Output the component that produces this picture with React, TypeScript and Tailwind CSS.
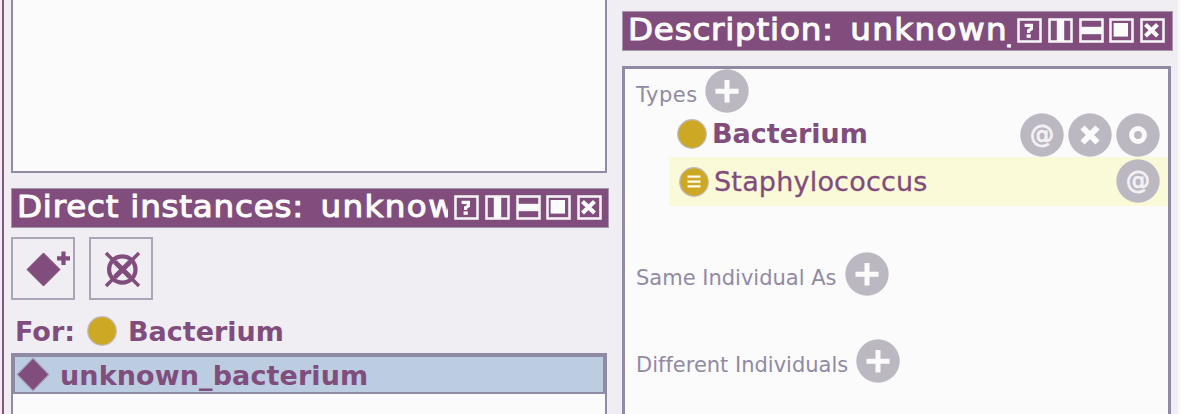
import React from "react";

function Frame({ children }: { children?: React.ReactNode }) {
  return (
    <svg width="25" height="25" viewBox="0 0 25 25" className="shrink-0">
      <rect x="1.5" y="1.5" width="22" height="22" fill="none" stroke="#f4f2f6" strokeWidth="2.6" />
      {children}
    </svg>
  );
}

function WindowButtons() {
  return (
    <div className="flex shrink-0 gap-[5.7px]">
      <Frame>
        <path d="M7.6 7.4H14.4V10.8L11.6 12.6V15" fill="none" stroke="#fbfbfb" strokeWidth="3.2" />
        <path d="M9.6 16.4h4.2v3.4h-4.2z" fill="#fbfbfb" />
      </Frame>
      <Frame>
        <path d="M8.8 2h7.4v21H8.8z" fill="#fbfbfb" />
      </Frame>
      <Frame>
        <path d="M2 8.8h21v7.4H2z" fill="#fbfbfb" />
      </Frame>
      <Frame>
        <path d="M4.6 5h14.4v13.6H4.6z" fill="#fbfbfb" />
      </Frame>
      <Frame>
        <path d="M5.5 6.5L17.5 18M17.5 6.5L5.5 18" fill="none" stroke="#fbfbfb" strokeWidth="4.2" />
      </Frame>
    </div>
  );
}

function TitleBar({ label, value, clip, className }: { label: string; value: string; clip: string; className: string }) {
  return (
    <div className={"flex justify-between border border-[#a596ad] bg-[#804d7c] pt-[6px] " + className}>
      <div className={"-mt-[6px] h-[38px] shrink-0 overflow-hidden " + clip}>
        <div className="origin-left scale-x-[1.05] text-[31px] leading-[34px] whitespace-nowrap text-[#fbfbfb] [-webkit-text-stroke:1.1px_#fbfbfb]">
          <span className="tracking-[0.75px]">{label} </span>
          <span className="ml-[5px] tracking-[1.35px]">{value}</span>
        </div>
      </div>
      <WindowButtons />
    </div>
  );
}

function RoundButton({ kind }: { kind: "plus" | "at" | "cross" | "ring" }) {
  return (
    <svg width="44" height="44" viewBox="0 0 44 44" className="shrink-0">
      <circle cx="22" cy="22" r="21.7" fill="#bcb8c2" />
      {kind === "plus" && <path d="M22 11v22.5M10.5 22.3h23" stroke="#fbfbfb" strokeWidth="5" />}
      {kind === "cross" && <path d="M14.5 14.5L29.5 29.5M29.5 14.5L14.5 29.5" stroke="#fbfbfb" strokeWidth="6" />}
      {kind === "ring" && <circle cx="22" cy="22" r="6.4" fill="none" stroke="#fbfbfb" strokeWidth="5" />}
      {kind === "at" && (
        <text x="22" y="29.5" textAnchor="middle" fontSize="24" fontWeight="400" fill="#f3f1f5" stroke="#f3f1f5" strokeWidth="0.9">
          @
        </text>
      )}
    </svg>
  );
}

function ClassDot({ defined }: { defined?: boolean }) {
  return (
    <svg width="30" height="30" viewBox="0 0 30 30" className="shrink-0">
      <circle cx="15" cy="15" r="14.3" fill="#cca824" stroke="#c2bac2" strokeWidth="1.2" />
      {defined && <path d="M8.5 9.7h13M8.5 14.7h13M8.5 19.3h13" stroke="#fbfbea" strokeWidth="2.2" />}
    </svg>
  );
}

function ToolButton({ children }: { children: React.ReactNode }) {
  return (
    <button className="h-[63px] w-[64px] border-2 border-[#aaa5b7] bg-[#f0eef2]">
      <svg width="60" height="59" viewBox="0 0 60 59">{children}</svg>
    </button>
  );
}

function Section({ label, className }: { label: string; className: string }) {
  return (
    <div className={"flex h-[44px] pl-[11px] text-[21px] text-[#918aa3] " + className}>
      <span className="pt-[4px] leading-[44px] whitespace-nowrap [font-variant-ligatures:none]">{label}</span>
      <RoundButton kind="plus" />
    </div>
  );
}

export default function App() {
  return (
    <div className="flex h-[414px] w-[1181px] overflow-hidden bg-[#f0eef2] font-['DejaVu_Sans',sans-serif]">
      <div className="mr-[7px] ml-[2px] w-[2px] shrink-0 bg-[#84567f]" />
      <div className="flex w-[611px] shrink-0 flex-col">
        <div className="h-[173px] w-[596px] border-x-2 border-b-2 border-[#918aa5] bg-[#fbfbfb]" />
        <TitleBar
          label="Direct instances:"
          value="unknown_bacterium"
          clip="w-[431px]"
          className="mt-[15px] h-[40px] w-[598px] pr-[6px] pl-[5px]"
        />
        <div className="mt-[9px] flex gap-[14px]">
          <ToolButton>
            <path d="M30.5 14L47 30.5L30.5 47L14 30.5z" fill="#804d7c" stroke="#804d7c" strokeWidth="1" strokeLinejoin="round" />
            <path d="M50.5 12.5v13.5M44 19.3h13" stroke="#804d7c" strokeWidth="4.2" />
          </ToolButton>
          <ToolButton>
            <circle cx="31.3" cy="30.5" r="13.2" fill="none" stroke="#804d7c" strokeWidth="4.2" />
            <path d="M15 14L48 47M48 14L15 47" stroke="#804d7c" strokeWidth="3.4" />
            <path d="M24 23L39 38M39 23L24 38" stroke="#804d7c" strokeWidth="5" />
          </ToolButton>
        </div>
        <div className="flex h-[53px] pl-[4px] text-[27px] font-bold text-[#804d7c]">
          <span className="w-[72px] shrink-0 pt-[9px] leading-[46px]">For:</span>
          <div className="mr-[11px] pt-[15.5px]">
            <ClassDot />
          </div>
          <span className="pt-[9px] leading-[46px]">Bacterium</span>
        </div>
        <div className="h-[61px] w-[596px] border-x-2 border-t-2 border-[#918aa5] bg-[#fbfbfb]">
          <div className="flex h-[39px] border-2 border-[#918aa5] bg-[#bccde2] text-[27px] font-bold text-[#804d7c]">
            <svg width="34" height="35" viewBox="0 0 34 35" className="mr-[10px] ml-[1px] shrink-0">
              <path d="M17 1L33 17.5L17 34L1 17.5z" fill="#804d7c" stroke="#aaa6bf" strokeWidth="1.2" />
            </svg>
            <span className="leading-[38px] tracking-[0.1px]">unknown_bacterium</span>
          </div>
        </div>
      </div>
      <div className="flex w-[555px] shrink-0 flex-col">
        <TitleBar
          label="Description:"
          value="unknown_bacterium"
          clip="w-[383px]"
          className="mt-[11px] h-[40px] w-[551px] pr-[7px] pl-[5px]"
        />
        <div className="mt-[15px] h-[348px] w-[549px] border-x-[3px] border-t-[3px] border-[#918aa5] bg-[#fbfbfb]">
          <Section label="Types" className="gap-[7px] tracking-[0.5px]" />
          <div className="flex h-[44px] pr-[8px] pl-[52px] text-[27px] font-bold text-[#804d7c]">
            <div className="mr-[5px] pt-[6px]">
              <ClassDot />
            </div>
            <span className="grow leading-[41px]">Bacterium</span>
            <div className="flex gap-[4px]">
              <RoundButton kind="at" />
              <RoundButton kind="cross" />
              <RoundButton kind="ring" />
            </div>
          </div>
          <div className="ml-[44px] flex h-[49px] bg-[#fafad8] pt-[2px] pr-[8px] pl-[10px] text-[27px] text-[#804d7c]">
            <div className="mr-[5px] pt-[8px]">
              <ClassDot defined />
            </div>
            <span className="grow leading-[45px] tracking-[0.2px] [-webkit-text-stroke:0.3px_#804d7c]">Staphylococcus</span>
            <RoundButton kind="at" />
          </div>
          <Section label="Same Individual As" className="mt-[46px] gap-[8px]" />
          <Section label="Different Individuals" className="mt-[43px] gap-[8px]" />
        </div>
      </div>
      <div className="ml-[1px] w-[5px] shrink-0 bg-[#fbfbfb]" />
    </div>
  );
}
